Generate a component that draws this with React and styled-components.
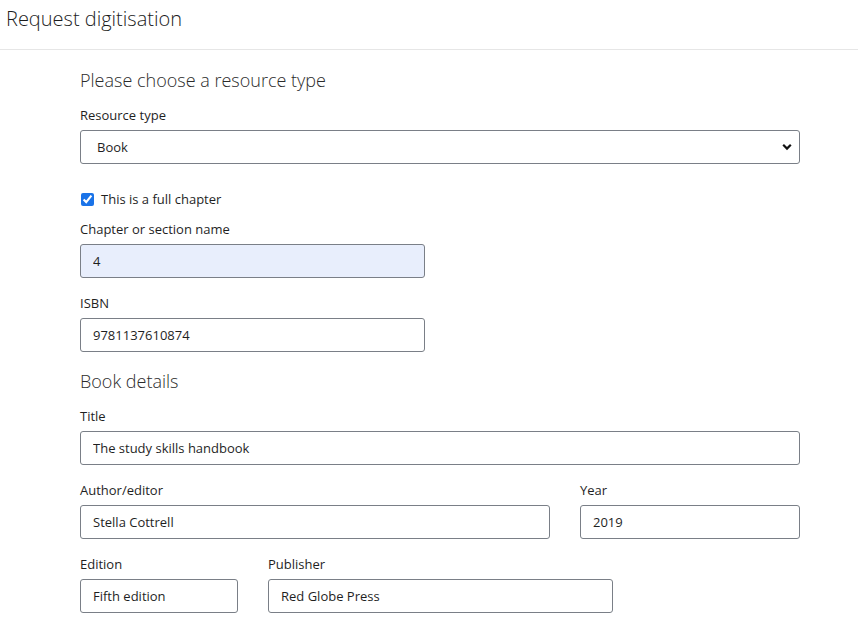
import React, { useState } from 'react';
import styled, { createGlobalStyle } from 'styled-components';

const GlobalStyle = createGlobalStyle`
  html, body {
    margin: 0;
    padding: 0;
    background: #ffffff;
  }
  body {
    font-family: "Open Sans", "Noto Sans", "Liberation Sans", sans-serif;
    color: #1f1f1f;
  }
  * { box-sizing: border-box; }
`;

const Header = styled.header`
  height: 50px;
  padding: 5px 6px 0;
  border-bottom: 1px solid #e6e6e6;
`;

const PageTitle = styled.h1`
  margin: 0;
  font-size: 20px;
  line-height: 28px;
  font-weight: 300;
  color: #1c1c1c;
`;

const Main = styled.main`
  width: 720px;
  margin-left: 80px;
  padding-top: 18px;
  display: flex;
  flex-direction: column;
`;

const SectionTitle = styled.h2`
  margin: ${p => p.$top || 0}px 0 14px;
  font-size: 18px;
  line-height: 24px;
  font-weight: 300;
  color: #2b2b2b;
`;

const Field = styled.div`
  display: flex;
  flex-direction: column;
  gap: 6px;
  width: ${p => (p.$width ? `${p.$width}px` : 'auto')};
  flex: ${p => (p.$grow ? 1 : 'none')};
  margin-bottom: ${p => (p.$last ? 0 : 16)}px;
`;

const Row = styled.div`
  display: flex;
  gap: 30px;
  width: ${p => (p.$width ? `${p.$width}px` : 'auto')};
`;

const Label = styled.label`
  font-size: 13px;
  line-height: 18px;
  color: #1f1f1f;
`;

const Input = styled.input`
  height: 34px;
  width: 100%;
  padding: 0 12px;
  border: 1px solid #7a7f87;
  border-radius: 3px;
  background: ${p => (p.$filled ? '#e8eefc' : '#ffffff')};
  font-family: inherit;
  font-size: 13px;
  color: #1f1f1f;
  outline: none;
`;

const SelectWrap = styled.div`
  position: relative;
  width: 100%;
`;

const Select = styled.select`
  appearance: none;
  height: 34px;
  width: 100%;
  padding: 0 32px 0 16px;
  border: 1px solid #7a7f87;
  border-radius: 3px;
  background: #ffffff;
  font-family: inherit;
  font-size: 13px;
  color: #1f1f1f;
  outline: none;
`;

const Chevron = styled.svg`
  position: absolute;
  right: 8px;
  top: 13px;
  pointer-events: none;
`;

const CheckRow = styled.label`
  display: flex;
  align-items: center;
  gap: 7px;
  margin: 26px 0 12px;
  font-size: 13px;
  line-height: 18px;
  color: #1f1f1f;
`;

const Checkbox = styled.input`
  width: 13px;
  height: 13px;
  margin: 0 0 0 1px;
  accent-color: #1a73e8;
`;

export default function App() {
  const [full, setFull] = useState(true);

  return (
    <>
      <GlobalStyle />
      <Header>
        <PageTitle>Request digitisation</PageTitle>
      </Header>
      <Main>
        <SectionTitle>Please choose a resource type</SectionTitle>
        <Field $last>
          <Label htmlFor="rtype">Resource type</Label>
          <SelectWrap>
            <Select id="rtype" defaultValue="book">
              <option value="book">Book</option>
              <option value="journal">Journal article</option>
            </Select>
            <Chevron width="10" height="8" viewBox="0 0 10 8">
              <path d="M1.2 1.8 L5 5.6 L8.8 1.8" fill="none" stroke="#111" strokeWidth="2.2" />
            </Chevron>
          </SelectWrap>
        </Field>

        <CheckRow>
          <Checkbox type="checkbox" checked={full} onChange={() => setFull(!full)} />
          This is a full chapter
        </CheckRow>

        <Field $width={345}>
          <Label htmlFor="chapter">Chapter or section name</Label>
          <Input id="chapter" $filled defaultValue="4" />
        </Field>
        <Field $width={345} $last>
          <Label htmlFor="isbn">ISBN</Label>
          <Input id="isbn" defaultValue="9781137610874" />
        </Field>

        <SectionTitle $top={17}>Book details</SectionTitle>
        <Field>
          <Label htmlFor="title">Title</Label>
          <Input id="title" defaultValue="The study skills handbook" />
        </Field>
        <Row>
          <Field $grow>
            <Label htmlFor="author">Author/editor</Label>
            <Input id="author" defaultValue="Stella Cottrell" />
          </Field>
          <Field $width={220}>
            <Label htmlFor="year">Year</Label>
            <Input id="year" defaultValue="2019" />
          </Field>
        </Row>
        <Row $width={533}>
          <Field $width={158}>
            <Label htmlFor="edition">Edition</Label>
            <Input id="edition" defaultValue="Fifth edition" />
          </Field>
          <Field $grow>
            <Label htmlFor="publisher">Publisher</Label>
            <Input id="publisher" defaultValue="Red Globe Press" />
          </Field>
        </Row>
      </Main>
    </>
  );
}
